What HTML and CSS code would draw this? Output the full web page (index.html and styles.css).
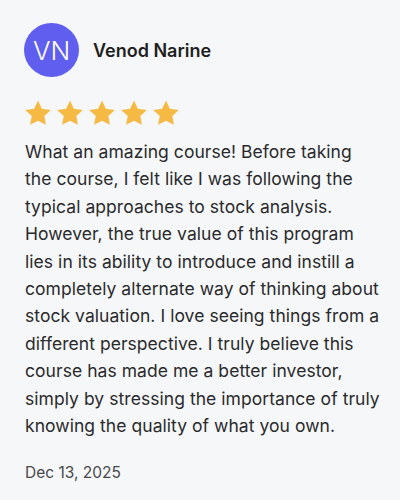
FILE: index.html
```html
<!DOCTYPE html>
<html>
<head>
<meta charset="utf-8">
<link rel="stylesheet" href="styles.css">
</head>
<body>
<div class="review">
  <div class="header">
    <div class="avatar">VN</div>
    <div class="name">Venod Narine</div>
  </div>
  <div class="stars">
    <svg class="star" viewBox="0 0 24 23"><path d="M12 0.5l3.6 7.5 8.2 1.1-6 5.7 1.5 8.1L12 19l-7.3 3.9 1.5-8.1-6-5.7 8.2-1.1z"/></svg>
    <svg class="star" viewBox="0 0 24 23"><path d="M12 0.5l3.6 7.5 8.2 1.1-6 5.7 1.5 8.1L12 19l-7.3 3.9 1.5-8.1-6-5.7 8.2-1.1z"/></svg>
    <svg class="star" viewBox="0 0 24 23"><path d="M12 0.5l3.6 7.5 8.2 1.1-6 5.7 1.5 8.1L12 19l-7.3 3.9 1.5-8.1-6-5.7 8.2-1.1z"/></svg>
    <svg class="star" viewBox="0 0 24 23"><path d="M12 0.5l3.6 7.5 8.2 1.1-6 5.7 1.5 8.1L12 19l-7.3 3.9 1.5-8.1-6-5.7 8.2-1.1z"/></svg>
    <svg class="star" viewBox="0 0 24 23"><path d="M12 0.5l3.6 7.5 8.2 1.1-6 5.7 1.5 8.1L12 19l-7.3 3.9 1.5-8.1-6-5.7 8.2-1.1z"/></svg>
  </div>
  <p class="text">What an amazing course! Before taking<br>the course, I felt like I was following the<br>typical approaches to stock analysis.<br>However, the true value of this program<br>lies in its ability to introduce and instill a<br>completely alternate way of thinking about<br>stock valuation. I love seeing things from a<br>different perspective. I truly believe this<br>course has made me a better investor,<br>simply by stressing the importance of truly<br>knowing the quality of what you own.</p>
  <div class="date">Dec 13, 2025</div>
</div>
</body>
</html>
```
FILE: styles.css
```css
html, body {
  margin: 0;
  padding: 0;
  background: #f6f7f9;
}
body {
  font-family: Inter, "Noto Sans", sans-serif;
  color: #2a2a2c;
}
.review {
  padding: 23px 10px 0 25px;
}
.header {
  display: flex;
  align-items: center;
  gap: 14px;
}
.avatar {
  width: 55px;
  height: 54px;
  border-radius: 50%;
  background: #5f5eee;
  color: #fff;
  font-size: 26px;
  font-weight: 300;
  display: flex;
  align-items: center;
  justify-content: center;
  margin-left: -1px;
}
.name {
  font-size: 18px;
  font-weight: 600;
  color: #1f1f21;
}
.stars {
  display: flex;
  gap: 6px;
  margin-top: 23px;
}
.star {
  width: 26px;
  height: 25px;
  fill: #f6b944;
}
.text {
  margin: 13px 0 0 0;
  font-size: 17.5px;
  line-height: 27.4px;
  letter-spacing: 0.05px;
  white-space: nowrap;
}
.date {
  margin-top: 24px;
  font-size: 15.5px;
  color: #48484b;
}
```
